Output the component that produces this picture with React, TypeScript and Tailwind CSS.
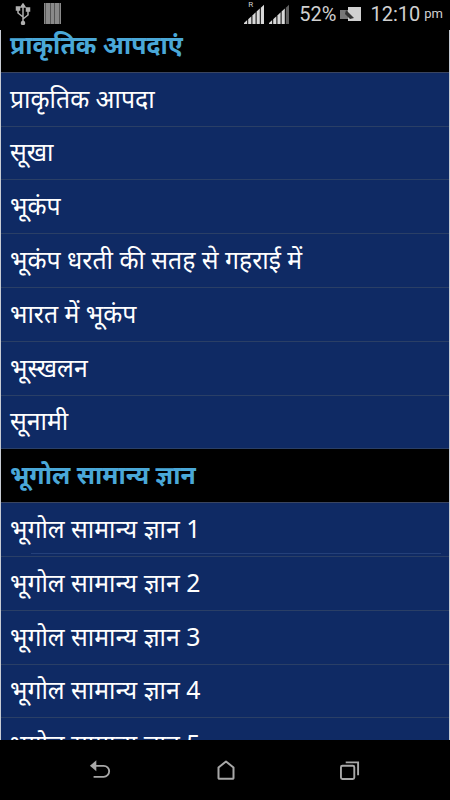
const firstGroup = [
  "प्राकृतिक आपदा",
  "सूखा",
  "भूकंप",
  "भूकंप धरती की सतह से गहराई में",
  "भारत में भूकंप",
  "भूस्खलन",
  "सूनामी",
];

const secondGroup = [
  "भूगोल सामान्य ज्ञान 1",
  "भूगोल सामान्य ज्ञान 2",
  "भूगोल सामान्य ज्ञान 3",
  "भूगोल सामान्य ज्ञान 4",
  "भूगोल सामान्य ज्ञान 5",
];

function SectionHeader({ title }: { title: string }) {
  return (
    <div className="flex h-[53.8px] shrink-0 items-center border-b border-[#3a4560] bg-black pb-[2px] pl-[9px] text-[24.8px] font-bold text-[#4aa8d8]">
      {title}
    </div>
  );
}

function Row({ title, accent }: { title: string; accent?: boolean }) {
  return (
    <div className="relative flex h-[53.8px] shrink-0 items-center border-b border-[#2a3f66] bg-[#0f2a64] pb-[2px] pl-[9px] text-[24.8px] text-white">
      {title}
      {/* faint second line under the pressed row */}
      {accent && <div className="absolute bottom-[2px] left-[30px] right-[8px] h-px bg-[#24407a]" />}
    </div>
  );
}

function SignalIcon({ dim }: { dim: boolean }) {
  const bars = [0, 1, 2, 3, 4];
  return (
    <svg width="21" height="20" viewBox="0 0 21 20">
      {bars.map((b) => (
        <polygon
          key={b}
          points={`${b * 4.2},${19 - b * 3.8} ${b * 4.2 + 3.2},${19 - (b + 0.8) * 3.8} ${b * 4.2 + 3.2},20 ${b * 4.2},20`}
          fill={dim && b === 4 ? "#5f5f5f" : "#d8d8d8"}
        />
      ))}
    </svg>
  );
}

function StatusBar() {
  return (
    <div className="flex h-[30px] shrink-0 items-center justify-between bg-black pb-[3px] pl-[15px] pr-[7px]">
      <div className="flex items-center gap-[13px]">
        <svg width="16" height="22" viewBox="0 0 16 22" fill="none" stroke="#b0b0b0" strokeWidth="1.5">
          <path d="M8 2v18M8 14L3 10V6M8 16l5-4V7" />
          <circle cx="8" cy="20" r="1.5" fill="#b0b0b0" />
          <rect x="1.5" y="4" width="3" height="3" fill="#b0b0b0" />
          <rect x="11.5" y="5" width="3" height="3" fill="#b0b0b0" />
          <path d="M6 4l2-3 2 3z" fill="#b0b0b0" />
        </svg>
        <div className="flex h-[21px] w-[17px] justify-between bg-[#8a8a8a] px-px">
          <div className="w-px bg-[#555555]" />
          <div className="w-px bg-[#555555]" />
          <div className="w-px bg-[#555555]" />
          <div className="w-px bg-[#555555]" />
        </div>
      </div>
      <div className="flex items-center font-['Roboto',sans-serif] text-[#d0d0d0]">
        <div className="relative mr-[4px]">
          <span className="absolute left-[4px] top-[-3px] text-[8px] leading-none">R</span>
          <SignalIcon dim={false} />
        </div>
        <SignalIcon dim />
        <span className="ml-[9px] text-[20px] leading-none">52%</span>
        <svg className="ml-[4px]" width="22" height="14" viewBox="0 0 22 14">
          <rect x="0" y="3" width="10" height="9" fill="#777777" />
          <rect x="8" y="0" width="13" height="14" fill="#d0d0d0" />
          <path d="M6 3l8 8-4 1-5-5z" fill="#333333" />
        </svg>
        <span className="ml-[8px] text-[20px] leading-none">12:10</span>
        <span className="ml-[4px] text-[13px] leading-none">pm</span>
      </div>
    </div>
  );
}

function NavBar() {
  return (
    <div className="flex h-[60px] shrink-0 items-center justify-between bg-black pb-[1px] pl-[89px] pr-[90px]">
      <svg width="22" height="21" viewBox="0 0 24 22" fill="none" stroke="#a8a8a8" strokeWidth="2">
        <path d="M3 7h13a6 6 0 0 1 0 12H5" />
        <path d="M8 1v12L1 7z" fill="#a8a8a8" stroke="none" />
      </svg>
      <svg width="18" height="20" viewBox="0 0 18 20" fill="none" stroke="#a8a8a8" strokeWidth="2">
        <path d="M1.500 7.500L9 1.500l7.500 6V18a.8.8 0 0 1-.8.8H2.300a.8.8 0 0 1-.8-.8z" strokeLinejoin="round" />
      </svg>
      <svg width="20" height="20" viewBox="0 0 21 21" fill="none" stroke="#a8a8a8" strokeWidth="2">
        <rect x="1" y="6" width="14" height="14" rx="1.500" />
        <path d="M6 2.500h13V16" />
      </svg>
    </div>
  );
}

export default function App() {
  return (
    <div className="flex h-[800px] w-[450px] flex-col overflow-hidden bg-black font-['Noto_Sans','Lato',sans-serif]">
      <StatusBar />
      <div className="min-h-0 flex-1 overflow-hidden border-x border-[#c8ccd4]">
        <div className="-mt-[11px] flex flex-col">
          <SectionHeader title="प्राकृतिक आपदाएं" />
          {firstGroup.map((item) => (
            <Row key={item} title={item} />
          ))}
          <SectionHeader title="भूगोल सामान्य ज्ञान" />
          {secondGroup.map((item, i) => (
            <Row key={item} title={item} accent={i === 0} />
          ))}
        </div>
      </div>
      <NavBar />
    </div>
  );
}
